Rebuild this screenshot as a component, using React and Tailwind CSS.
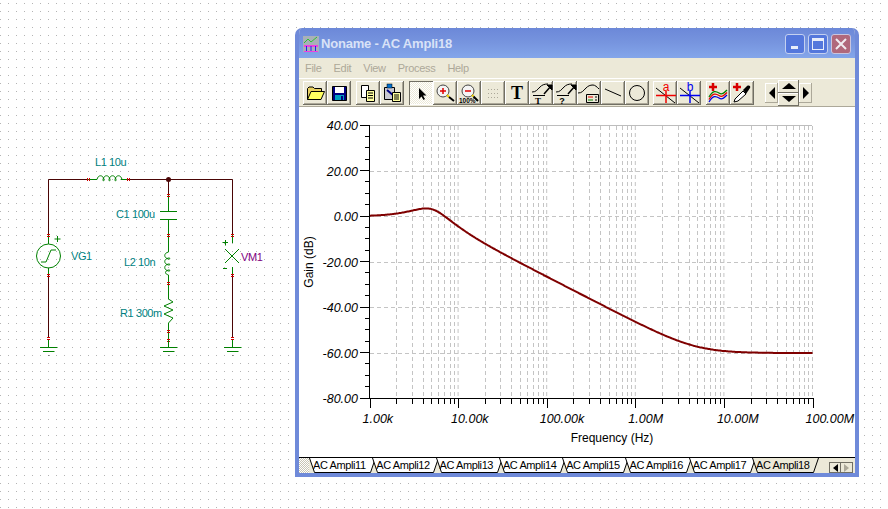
import React from 'react';

const TABS = ['AC Ampli11', 'AC Ampli12', 'AC Ampli13', 'AC Ampli14', 'AC Ampli15', 'AC Ampli16', 'AC Ampli17', 'AC Ampli18'];
const MENU = ['File', 'Edit', 'View', 'Process', 'Help'];

const X0 = 369.5;
const DECADE = 88.6;
const yOf = (db) => 125.5 + (40 - db) * 2.275;

// L1 10u, C1 100u, L2 10n, R1 300m low-pass, same values as the schematic
function gainDb(f) {
  const w = 2 * Math.PI * f;
  const im = w * 10e-9 - 1 / (w * 100e-6);
  const re = 0.3;
  const imTotal = im + w * 10e-6;
  return 10 * Math.log10((re * re + im * im) / (re * re + imTotal * imTotal));
}

const curve = Array.from({ length: 444 }, (_, i) => {
  const f = 1000 * Math.pow(10, i / DECADE);
  return `${i === 0 ? 'M' : 'L'}${(X0 + i).toFixed(1)} ${yOf(gainDb(f)).toFixed(1)}`;
}).join(' ');

const minorX = [];
const majorX = [];
for (let d = 0; d < 5; d++) {
  majorX.push(X0 + d * DECADE);
  for (let m = 2; m < 10; m++) minorX.push(Math.round(X0 + (d + Math.log10(m)) * DECADE) + 0.5);
}
majorX.push(X0 + 5 * DECADE);

const X_LABELS = ['1.00k', '10.00k', '100.00k', '1.00M', '10.00M', '100.00M'];
const Y_LABELS = [40, 20, 0, -20, -40, -60, -80];

function Chart() {
  return (
    <svg viewBox="299 107 556 350" className="w-[556px] h-[350px] block font-['Liberation_Sans',sans-serif]">
      {minorX.concat(majorX.slice(1)).map((x) => (
        <line key={x} x1={x} x2={x} y1="126" y2="398" stroke="#c4c4c4" strokeDasharray="4 3" />
      ))}
      {[20, 0, -20, -40, -60].map((d) => (
        <line key={d} x1="370" x2="812" y1={Math.floor(yOf(d)) + 0.5} y2={Math.floor(yOf(d)) + 0.5} stroke="#c4c4c4" strokeDasharray="4 3" />
      ))}
      <line x1="369" x2="812" y1="125.5" y2="125.5" stroke="#bdbdbd" />
      <path d={curve} fill="none" stroke="#7f0000" strokeWidth="2" />
      <line x1="369.5" x2="369.5" y1="125" y2="399" stroke="#000" />
      <line x1="369" x2="813" y1="398.5" y2="398.5" stroke="#000" />
      {Array.from({ length: 25 }, (_, i) => {
        const y = Math.floor(125 + i * 11.375) + 0.5;
        return <line key={i} x1={i % 4 === 0 ? 360 : 365} x2="369" y1={y} y2={y} stroke="#000" />;
      })}
      {minorX.map((x) => (
        <line key={x} x1={x} x2={x} y1="398" y2="404" stroke="#000" />
      ))}
      {majorX.map((x) => (
        <line key={x} x1={Math.round(x) + 0.5} x2={Math.round(x) + 0.5} y1="398" y2="408" stroke="#000" />
      ))}
      {Y_LABELS.map((d) => (
        <text key={d} x="358" y={Math.floor(yOf(d)) + 5} textAnchor="end" className="text-[12.5px] italic">
          {d.toFixed(2)}
        </text>
      ))}
      {X_LABELS.map((t, i) => (
        <text key={t} x={X0 + i * DECADE - 7} y="423" className="text-[12.5px] italic">
          {t}
        </text>
      ))}
      <text x="612" y="442" textAnchor="middle" className="text-[12px]">Frequency (Hz)</text>
      <text transform="translate(313 262) rotate(-90)" textAnchor="middle" className="text-[12px]">Gain (dB)</text>
    </svg>
  );
}

function Pin({ x, y, horizontal }) {
  return horizontal ? (
    <g stroke="#d00000"><line x1={x - 0.5} x2={x - 0.5} y1={y - 1} y2={y + 2} /><line x1={x + 1.5} x2={x + 1.5} y1={y - 1} y2={y + 2} /></g>
  ) : (
    <g stroke="#d00000"><line x1={x - 1} x2={x + 2} y1={y - 0.5} y2={y - 0.5} /><line x1={x - 1} x2={x + 2} y1={y + 1.5} y2={y + 1.5} /></g>
  );
}

function Ground({ x }) {
  return (
    <g stroke="#008000">
      <line x1={x} x2={x} y1="340" y2="347" />
      <line x1={x - 8.5} x2={x + 9} y1="347.5" y2="347.5" />
      <line x1={x - 5.5} x2={x + 6} y1="351.5" y2="351.5" />
      <line x1={x} x2={x + 1} y1="355.5" y2="355.5" stroke="#444" />
    </g>
  );
}

const WIRE = '#4a0505';
const GREEN = '#008000';

function Schematic() {
  return (
    <svg viewBox="0 140 280 230" className="w-[280px] h-[230px] block mt-[140px] shrink-0 font-['Liberation_Sans',sans-serif]">
      <g fill="none" stroke={WIRE} strokeWidth="1">
        <path d="M48.5 235V179.5H88M128 179.5H232.5V235M168.5 179.5V195M48.5 275V338M232.5 275V338" />
      </g>
      <circle cx="168.5" cy="179.5" r="2.5" fill={WIRE} />
      <g fill="none" stroke={GREEN}>
        <path d="M88 179.5H97M121 179.5H128" />
        <path d="M97 179.5c1-5 6-5 7 0c0 2-1 2-1 0c1-5 6-5 7 0c0 2-1 2-1 0c1-5 6-5 7 0c0 2-1 2-1 0c1-5 6-5 7 0" />
        {/* VG1 */}
        <path d="M48.5 235V244M48.5 268V275" />
        <circle cx="48.5" cy="256" r="12" />
        <path d="M41 262H46L51 250H56" />
        <path d="M54.5 239H60.5M57.5 236V242" />
        {/* C1 */}
        <path d="M168.5 195V211M160 211.5H177M160 219.5H177M168.5 220V252" />
        {/* L2 */}
        <path d="M168.5 252c-5 1-5 6 0 7c2 0 2-1 0-1c-5 1-5 6 0 7c2 0 2-1 0-1c-5 1-5 6 0 7c2 0 2-1 0-1c-4 1-4 4 0 5" />
        <path d="M168.5 275V299" />
        {/* R1 */}
        <path d="M168.5 299L173 302L164 306L173 310L164 314L173 318L168.5 323V340" />
        {/* VM1 */}
        <path d="M232.5 235V243M232.5 267V275M225 249L239 263M239 249L225 263" />
        <path d="M222.5 242.5H228M225.5 240V245.5M223 268.5H227" />
      </g>
      {[88, 128].map((x) => <Pin key={x} x={x} y={179} horizontal />)}
      {[[48, 235], [48, 275], [48, 338], [168, 195], [168, 235], [168, 283], [168, 331], [168, 340], [232, 235], [232, 275], [232, 338]].map(([x, y]) => (
        <Pin key={`${x}-${y}`} x={x} y={y} />
      ))}
      <Ground x={48.5} />
      <Ground x={168.5} />
      <Ground x={232.5} />
      <g fill="#007f7f" className="text-[11px] tracking-[-0.4px]">
        <text x="95" y="166">L1 10u</text>
        <text x="116" y="218">C1 100u</text>
        <text x="71" y="260">VG1</text>
        <text x="124" y="266">L2 10n</text>
        <text x="120" y="317">R1 300m</text>
      </g>
      <text x="241" y="261" fill="#800080" className="text-[11px] tracking-[-0.4px]">VM1</text>
    </svg>
  );
}

function Btn({ children, pressed, className = '' }) {
  return (
    <div
      className={`w-[24px] h-[24px] shrink-0 ${
        pressed
          ? 'bg-[conic-gradient(#ffffff_25%,#ece9d8_0_50%,#ffffff_0_75%,#ece9d8_0)] bg-[length:2px_2px] shadow-[inset_1px_1px_0_#716f64,inset_-1px_-1px_0_#ffffff]'
          : 'bg-[#ece9d8] shadow-[inset_-1px_-1px_0_#716f64,inset_1px_1px_0_#ffffff,inset_-2px_-2px_0_#aca899]'
      } ${className}`}
    >
      <svg viewBox="0 0 24 24" className="w-[24px] h-[24px] block">{children}</svg>
    </div>
  );
}

const Plus = ({ x, y, c = '#d80000' }) => <path d={`M${x - 4} ${y}H${x + 4}M${x} ${y - 4}V${y + 4}`} stroke={c} strokeWidth="2.5" fill="none" />;

const Cursor = ({ c, letter }) => (
  <>
    <path d="M3 7L22 22" stroke="#000" />
    <path d="M3 14.5H23M13 10V22" stroke={c} strokeWidth="1.5" />
    <text x="13" y="9.500" textAnchor="middle" fill={c} className="text-[12px] font-['Liberation_Sans',sans-serif]">{letter}</text>
  </>
);

function Toolbar() {
  const curveBase = (
    <>
      <path d="M3 11C7 11 8 9 11 6C13 4 15 3 19 3" fill="none" stroke="#000" />
      <path d="M15 13L22 5" stroke="#000" strokeWidth="1.5" />
      <path d="M18 4H23V9Z" fill="#000" stroke="#000" />
      <path d="M4 14.500H16" stroke="#000" />
    </>
  );
  return (
    <div className="flex items-center h-[29px] pl-[4px] bg-[#ece9d8] border-t border-t-white border-b border-b-[#aca899]">
      <Btn>
        <path d="M4.500 18.500V7.500L6 6H10L11.500 7.500H18.500V10.500" fill="#e8d060" stroke="#000" />
        <path d="M4.500 18.500L8 10.500H21.500L18 18.500Z" fill="#ffff60" stroke="#000" />
      </Btn>
      <Btn>
        <path d="M5.500 5.500H19.500V19.500H5.500Z" fill="#000080" stroke="#000" />
        <rect x="8" y="6" width="9" height="6" fill="#fff" />
        <rect x="8" y="14" width="9" height="5" fill="#00a0c0" />
        <rect x="14" y="15" width="2" height="4" fill="#000080" />
      </Btn>
      <Btn className="ml-[5px]">
        <path d="M5.500 4.500H12.500V16.500H5.500Z" fill="#fff" stroke="#000" />
        <path d="M10.500 9.500H18.500V20.500H10.500Z" fill="#ffffa0" stroke="#000" />
        <path d="M12 12H17M12 14.500H17M12 17H17" stroke="#000" />
      </Btn>
      <Btn>
        <path d="M4.500 6.500H14.500V18.500H4.500Z" fill="#c8c8d0" stroke="#000" />
        <rect x="7" y="3" width="5" height="4" fill="#0070d0" stroke="#000" strokeWidth="0.5" />
        <path d="M7 9L14 15" stroke="#000080" strokeWidth="2" />
        <path d="M12.500 11.500H20.500V20.500H12.500Z" fill="#ffffa0" stroke="#000" />
        <path d="M14 14H19M14 16H19M14 18H19" stroke="#000" />
      </Btn>
      <Btn pressed className="ml-[5px]">
        <path d="M10 7V18L12.500 15.500L14.500 19L16 18L14 14.500H17.500Z" fill="#000" />
      </Btn>
      <Btn>
        <circle cx="10" cy="10" r="6" fill="#f4f4f4" stroke="#444" />
        <path d="M7 10H13M10 7V13" stroke="#e00000" strokeWidth="1.500" />
        <path d="M14 14L16 16" stroke="#f0d000" strokeWidth="2" />
        <path d="M16 16L21 20" stroke="#000" strokeWidth="2" />
      </Btn>
      <Btn>
        <circle cx="11" cy="10" r="6" fill="#f4f4f4" stroke="#444" />
        <path d="M8 10H14" stroke="#e00000" strokeWidth="1.500" />
        <path d="M15 14L16.500 15.500" stroke="#f0d000" strokeWidth="2" />
        <path d="M16.500 15.500L21 20" stroke="#000" strokeWidth="2" />
        <text x="2" y="22" className="text-[6.500px] font-bold font-['Liberation_Sans',sans-serif]">100%</text>
      </Btn>
      <Btn>
        {[7, 10, 13, 16].map((x) => [8, 12, 16].map((y) => <rect key={`${x}${y}`} x={x} y={y} width="1" height="1" fill="#aca899" />))}
      </Btn>
      <Btn>
        <text x="12" y="18" textAnchor="middle" className="text-[18px] font-bold font-['Liberation_Serif',serif]">T</text>
      </Btn>
      <Btn>
        {curveBase}
        <text x="9" y="22.500" textAnchor="middle" className="text-[9px] font-bold font-['Liberation_Serif',serif]">T</text>
      </Btn>
      <Btn>
        {curveBase}
        <text x="9" y="22.500" textAnchor="middle" className="text-[9px] font-bold font-['Liberation_Sans',sans-serif]">?</text>
      </Btn>
      <Btn>
        <path d="M1 12C5 12 6 10 9 7C11 5 13 4 16 4C18 4 20 6 22 8" fill="none" stroke="#000" />
        <path d="M9.500 13.500H21.500V21.500H9.500Z" fill="none" stroke="#000" />
        <path d="M11 16H16" stroke="#e00000" />
        <path d="M11 19H16" stroke="#008000" />
        <path d="M18 16H20M18 19H20" stroke="#000" />
      </Btn>
      <Btn>
        <path d="M4 8L20 15" stroke="#000" />
      </Btn>
      <Btn>
        <circle cx="12" cy="12" r="7.500" fill="none" stroke="#000" />
      </Btn>
      <Btn className="ml-[4px]">
        <Cursor c="#f00000" letter="a" />
      </Btn>
      <Btn>
        <Cursor c="#0000f0" letter="b" />
      </Btn>
      <Btn className="ml-[5px]">
        <Plus x={7} y={6} />
        <path d="M3 16C7 9 10 10 13 12C16 14 18 12 21 9" fill="none" stroke="#008000" strokeWidth="1.300" />
        <path d="M3 18.500C7 11.500 10 12.500 13 14.500C16 16.500 18 14.500 21 11.500" fill="none" stroke="#e00000" strokeWidth="1.300" />
        <path d="M3 21C7 14 10 15 13 17C16 19 18 17 21 14" fill="none" stroke="#0000e0" strokeWidth="1.300" />
      </Btn>
      <Btn>
        <Plus x={7} y={6} />
        <path d="M4 21L5 18L13 10L16 13L8 20Z" fill="#fff" stroke="#000" />
        <path d="M13 9L17 5C19 4 21 5 20 7L16 13Z" fill="#000" />
      </Btn>
      <div className="flex items-center ml-[11px]">
        <div className="w-[13px] h-[20px] flex items-center justify-center bg-[#ece9d8] shadow-[inset_-1px_-1px_0_#aca899,inset_1px_1px_0_#ffffff]">
          <div className="w-0 h-0 border-y-[6px] border-y-transparent border-r-[6px] border-r-black" />
        </div>
        <div className="flex flex-col w-[21px]">
          <div className="h-[13px] flex items-center justify-center bg-[#ece9d8] shadow-[inset_-1px_-1px_0_#716f64,inset_1px_1px_0_#ffffff]">
            <div className="w-0 h-0 border-x-[7px] border-x-transparent border-b-[6px] border-b-black" />
          </div>
          <div className="h-[13px] flex items-center justify-center bg-[#ece9d8] shadow-[inset_-1px_-1px_0_#716f64,inset_1px_1px_0_#ffffff]">
            <div className="w-0 h-0 border-x-[7px] border-x-transparent border-t-[6px] border-t-black" />
          </div>
        </div>
        <div className="w-[13px] h-[20px] flex items-center justify-center bg-[#ece9d8] shadow-[inset_-1px_-1px_0_#aca899,inset_1px_1px_0_#ffffff]">
          <div className="w-0 h-0 border-y-[6px] border-y-transparent border-l-[6px] border-l-black" />
        </div>
      </div>
    </div>
  );
}

function TitleBar() {
  return (
    <div className="flex items-center h-[30px] pt-[2px] pl-[4px] pr-[4px] bg-gradient-to-b from-[#6c88d8] via-[#7795df] to-[#84a6ea]">
      <svg viewBox="0 0 16 16" className="w-[16px] h-[16px] shrink-0">
        <rect width="16" height="16" fill="#a8b0b8" />
        <path d="M1 7L5 3L8 6L14 1" fill="none" stroke="#30c030" />
        <path d="M1 10H15" stroke="#f040e0" strokeWidth="2" />
        <path d="M3.500 10V15M8 10V15M12.500 10V15" stroke="#2020f0" />
        <path d="M1 15.500H15" stroke="#f040e0" />
      </svg>
      <span className="ml-[2px] text-[13px] font-bold tracking-[-0.2px] text-[#d9e2f7]">Noname - AC Ampli18</span>
      <div className="ml-auto flex gap-[3px]">
        <div className="relative w-[20px] h-[20px] rounded-[3px] border border-[#c4d0f0] bg-[#5477dc]">
          <div className="absolute left-[5px] bottom-[4px] w-[7px] h-[3px] bg-[#e8edfa]" />
        </div>
        <div className="w-[20px] h-[20px] rounded-[3px] border border-[#c4d0f0] bg-[#5477dc] flex items-center justify-center">
          <div className="w-[12px] h-[12px] border border-[#e8edfa] border-t-[3px]" />
        </div>
        <div className="w-[20px] h-[20px] rounded-[3px] border border-[#c9c4de] bg-[#b0687c] flex items-center justify-center">
          <svg viewBox="0 0 12 12" className="w-[12px] h-[12px]">
            <path d="M1 1L11 11M11 1L1 11" stroke="#f0ecf2" strokeWidth="2" />
          </svg>
        </div>
      </div>
    </div>
  );
}

function TabStrip() {
  return (
    <div className="flex items-start h-[16px] border-t border-t-black bg-[#ece9d8] overflow-hidden">
      <div className="w-[10px] h-[16px] shrink-0 bg-[conic-gradient(#ffffff_25%,#c8c5b4_0_50%,#ffffff_0_75%,#c8c5b4_0)] bg-[length:2px_2px]" />
      {TABS.map((t, i) => {
        const active = i === TABS.length - 1;
        return (
          <div key={t} className="relative w-[63.300px] h-[15px] shrink-0">
            <svg viewBox="0 0 70 15" className="absolute left-0 top-0 w-[70px] h-[15px]">
              <path d="M0.500 0L5.500 14.500H61.500L66.500 0" fill={active ? '#ece9d8' : '#ffffff'} stroke="#000" />
            </svg>
            <span className="absolute left-[4px] top-[0px] leading-[14px] text-[11px] tracking-[-0.4px] text-black whitespace-nowrap">{t}</span>
          </div>
        );
      })}
      <div className="ml-auto mr-[2px] mt-[4px] flex shrink-0">
        <div className="w-[12px] h-[11px] flex items-center justify-center bg-[#ece9d8] border border-[#716f64]">
          <div className="w-0 h-0 border-y-[4px] border-y-transparent border-r-[5px] border-r-black" />
        </div>
        <div className="w-[12px] h-[11px] flex items-center justify-center bg-[#ece9d8] border border-[#716f64] border-l-0">
          <div className="w-0 h-0 border-y-[4px] border-y-transparent border-l-[5px] border-l-[#aca899]" />
        </div>
      </div>
    </div>
  );
}

export default function App() {
  return (
    <div className="flex items-start w-[888px] h-[509px] overflow-hidden bg-white bg-[conic-gradient(from_270deg_at_1px_1px,#b4b4b4_25%,transparent_0)] bg-[length:8px_8px] bg-[position:0_3px] font-['Liberation_Sans',sans-serif]">
      <Schematic />
      <div className="flex flex-col w-[564px] h-[449px] ml-[15px] mt-[28px] shrink-0 rounded-t-[7px] border-x-4 border-b-4 border-x-[#6f8ad9] border-b-[#6f8ad9] bg-[#ece9d8] overflow-hidden">
        <TitleBar />
        <div className="flex items-center gap-[12px] h-[20px] pl-[6px] bg-[#ece9d8] text-[11px] tracking-[-0.3px] text-[#aca899]">
          {MENU.map((m) => <span key={m}>{m}</span>)}
        </div>
        <Toolbar />
        <div className="flex-1 bg-white">
          <Chart />
        </div>
        <TabStrip />
      </div>
    </div>
  );
}
